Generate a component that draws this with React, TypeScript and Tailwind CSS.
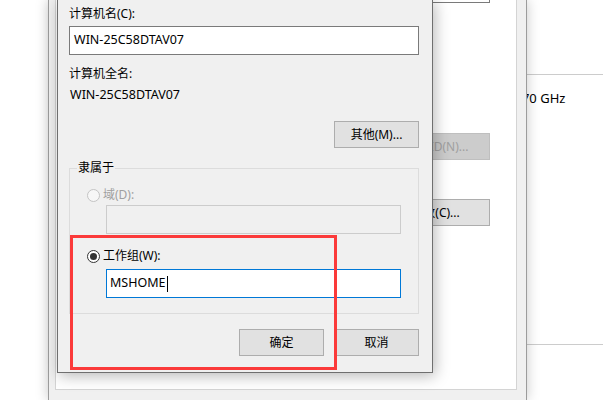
import React from 'react';

function Radio({ checked, disabled }: { checked?: boolean; disabled?: boolean }) {
  return (
    <span
      className={`flex h-[13px] w-[13px] shrink-0 items-center justify-center rounded-full border ${
        disabled ? 'border-[#c4c4c4] bg-[#f7f7f7]' : 'border-[#333333] bg-white'
      }`}
    >
      {checked && <span className="h-[7px] w-[7px] rounded-full bg-[#333333]" />}
    </span>
  );
}

function Button({ children, disabled, className = '' }: { children: React.ReactNode; disabled?: boolean; className?: string }) {
  return (
    <div
      className={`flex h-[27px] items-center justify-center border leading-none ${
        disabled ? 'border-[#bfbfbf] bg-[#cccccc] text-[#a0a0a0]' : 'border-[#adadad] bg-[#e1e1e1] text-black'
      } ${className}`}
    >
      {children}
    </div>
  );
}

export default function App() {
  return (
    <div className="relative flex h-[400px] w-[603px] overflow-hidden bg-white font-['Noto_Sans','Noto_Sans_CJK_SC',sans-serif] text-[12px] text-black">
      {/* desktop left strip */}
      <div className="w-[48px] shrink-0 bg-white" />

      {/* System properties window behind */}
      <div className="relative z-10 flex w-[479px] shrink-0 border-x border-[#9c9c9c] bg-[#f0f0f0] pb-[10px] pl-[6px] pr-[9px] shadow-[0_0_12px_rgba(0,0,0,0.22)]">
        <div className="flex h-[390px] flex-1 flex-col items-end border-x border-b border-[#d4d4d4] bg-white pr-[26px]">
          <div className="h-[3px] w-[300px] border-x border-b border-[#7a7a7a]" />
          <Button disabled className="mt-[130px] w-[109px]">网络 ID(N)...</Button>
          <Button className="mt-[39px] w-[109px]">更改(C)...</Button>
        </div>
      </div>

      {/* main system window on the right */}
      <div className="flex flex-1 flex-col overflow-hidden bg-white">
        <div className="h-[75px] border-b border-[#cccccc]" />
        <div className="-ml-[16px] mt-[15px] whitespace-nowrap text-[13px] leading-[16px]">2.70 GHz</div>
        <div className="h-[239px] border-b border-[#cccccc]" />
      </div>

      {/* 计算机名/域更改 dialog */}
      <div className="absolute left-[57px] top-[-1px] z-20 flex h-[374px] w-[376px] flex-col border border-[#6f6f6f] bg-[#f0f0f0] pl-[11px] pr-[13px] shadow-[2px_3px_14px_rgba(0,0,0,0.28)]">
        <div className="mt-[6px] leading-[16px]">计算机名(C):</div>
        <div className="mt-[4px] flex h-[29px] items-center border border-[#7a7a7a] bg-white pl-[4px] text-[12.5px]">
          WIN-25C58DTAV07
        </div>
        <div className="mt-[11px] leading-[16px]">计算机全名:</div>
        <div className="mt-[5px] pl-[1px] text-[12.5px] leading-[16px]">WIN-25C58DTAV07</div>
        <div className="mt-[18px] flex justify-end">
          <Button className="w-[85px]">其他(M)...</Button>
        </div>

        <fieldset className="mt-[12px] border border-[#dcdcdc] pb-[15px]">
          <legend className="ml-[7px] px-[1px] leading-[16px]">隶属于</legend>
          <div className="pl-[17px] pr-[17px]">
            <div className="mt-[11px] flex h-[16px] items-center gap-[3px] text-[#a0a0a0]">
              <Radio disabled />
              <span>域(D):</span>
            </div>
            <div className="ml-[19px] mt-[2px] h-[29px] border border-[#cccccc] bg-[#f0f0f0]" />
            <div className="mt-[14px] flex h-[16px] items-center gap-[3px]">
              <Radio checked />
              <span>工作组(W):</span>
            </div>
            <div className="ml-[19px] mt-[5px] flex h-[29px] items-center border border-[#0078d7] bg-white pl-[3px] text-[12.5px]">
              <span>MSHOME</span>
              <span className="ml-px h-[16px] w-px bg-black" />
            </div>
          </div>
        </fieldset>

        <div className="mt-[15px] flex justify-end gap-[10px]">
          <Button className="w-[85px]">确定</Button>
          <Button className="w-[85px]">取消</Button>
        </div>
      </div>

      {/* red highlight */}
      <div className="absolute left-[70px] top-[235px] z-30 h-[135px] w-[267px] border-[3px] border-[#fb3a3a]" />
    </div>
  );
}
